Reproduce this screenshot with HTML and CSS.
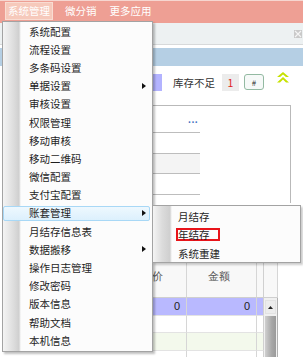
FILE: index.html
```html
<!DOCTYPE html>
<html>
<head>
<meta charset="utf-8">
<link rel="stylesheet" href="styles.css">
</head>
<body>
<div class="topbar">
  <span class="tab active">系统管理</span>
  <span class="tab">微分销</span>
  <span class="tab">更多应用</span>
</div>
<div class="strip">
  <span class="close"><svg width="8" height="8" viewBox="0 0 8 8"><rect width="8" height="8" fill="#c9c9c9"/><path d="M1 1L7 7M7 1L1 7" stroke="#f4f4f4" stroke-width="1.2"/></svg></span>
</div>
<div class="bluebar"></div>
<div class="main">
  <div class="filter">
    <span class="pbox"></span>
    <span class="lbl">库存不足</span>
    <span class="num">1</span>
    <span class="hash">#</span>
    <svg class="up" width="12" height="11" viewBox="0 0 12 11"><path d="M6 0L12 5H9L6 2.5L3 5H0Z" fill="#c6e200"/><path d="M6 5L12 10.5H9L6 7.5L3 10.5H0Z" fill="#c6e200"/></svg>
  </div>
  <div class="panel">
    <div class="prow first"><span class="dots">...</span></div>
    <div class="prow"></div>
    <div class="prow gray"></div>
    <div class="prow"></div>
  </div>
  <div class="table">
    <div class="trow head"><div class="c1">价</div><div class="c2">金额</div><div class="c3"></div><div class="c4"></div></div>
    <div class="trow sel"><div class="c1">0</div><div class="c2">0</div><div class="c3"></div><div class="c4 sb"><span class="sbup"><svg width="5" height="3" viewBox="0 0 5 3"><path d="M0 3L2.5 0L5 3Z" fill="#222"/></svg></span></div></div>
    <div class="trow"><div class="c1"></div><div class="c2"></div><div class="c3"></div><div class="c4 sb"><span class="thumb"></span></div></div>
    <div class="trow green"><div class="c1"></div><div class="c2"></div><div class="c3"></div><div class="c4 sb"><span class="thumb"></span></div></div>
    <div class="trow"><div class="c1"></div><div class="c2"></div><div class="c3"></div><div class="c4 sb"><span class="thumb"></span></div></div>
  </div>
</div>

<div class="menu">
  <div class="mi">系统配置</div>
  <div class="mi">流程设置</div>
  <div class="mi">多条码设置</div>
  <div class="mi sub">单据设置</div>
  <div class="mi">审核设置</div>
  <div class="mi">权限管理</div>
  <div class="mi">移动审核</div>
  <div class="mi">移动二维码</div>
  <div class="mi">微信配置</div>
  <div class="mi">支付宝配置</div>
  <div class="mi sub active">账套管理</div>
  <div class="mi">月结存信息表</div>
  <div class="mi sub">数据搬移</div>
  <div class="mi">操作日志管理</div>
  <div class="mi">修改密码</div>
  <div class="mi">版本信息</div>
  <div class="mi">帮助文档</div>
  <div class="mi">本机信息</div>
</div>

<div class="submenu">
  <div class="si">月结存</div>
  <div class="si"><span class="mark">年结存</span></div>
  <div class="si">系统重建</div>
</div>
</body>
</html>
```
FILE: styles.css
```css
* { box-sizing: border-box; }
html, body { margin: 0; padding: 0; }
body {
  width: 303px;
  height: 357px;
  overflow: hidden;
  position: relative;
  background: #fff;
  font-family: "Noto Sans CJK SC", "Noto Sans", sans-serif;
  font-size: 10.5px;
  color: #1c1c1c;
}
.topbar {
  height: 23px;
  background: #ee9f94;
  border-top: 1px solid #f6d6d0;
  display: flex;
  align-items: flex-start;
  padding-left: 5px;
  padding-top: 1px;
}
.tab {
  color: #fff;
  height: 18px;
  line-height: 18px;
  padding: 0 3px;
  margin-right: 6px;
  white-space: nowrap;
}
.tab.active {
  background: #f6c9bb;
  border: 1px solid #f9dcd2;
  line-height: 16px;
  padding: 0 2px;
}
.tab:nth-child(2) { margin-left: 3px; margin-right: 7px; }
.strip {
  height: 22px;
  background: #edf1f2;
  border-bottom: 1px solid #d7d9da;
  display: flex;
  justify-content: flex-end;
  align-items: center;
  padding-right: 1px;
  margin-bottom: 3px;
}
.close { display: flex; }
.bluebar {
  height: 18px;
  background: #b5cfe4;
}
.main { padding-left: 150px; }
.filter {
  height: 25px;
  display: flex;
  align-items: center;
}
.pbox {
  width: 12px;
  height: 17px;
  background: #b3b3ff;
  margin-top: 7px;
}
.lbl { margin-left: 11px; margin-top: 8px; color: #333; }
.num {
  width: 17px;
  height: 17px;
  background: #ececec;
  color: #e02020;
  margin-left: 7px;
  margin-top: 7px;
  display: flex;
  align-items: center;
  justify-content: center;
}
.hash {
  width: 20px;
  height: 16px;
  border: 1px solid #93baa2;
  border-radius: 3px;
  background: #f6f9f8;
  margin-left: 5px;
  margin-top: 7px;
  font-size: 8px;
  display: flex;
  align-items: center;
  justify-content: center;
  color: #333;
}
.up { margin-left: 13px; margin-top: -2px; }
.panel {
  margin-top: 14px;
  width: 141px;
  height: 98px;
  border-top: 1px solid #b9b9b9;
  border-right: 1px solid #b9b9b9;
}
.prow {
  width: 50px;
  height: 20.5px;
  border-bottom: 1px solid #bdbdbd;
}
.prow.first { height: 27px; position: relative; }
.prow.gray { background: #f4f4f4; }
.dots {
  position: absolute;
  left: 38px;
  top: 9px;
  color: #3f6fbf;
  font-size: 9px;
  line-height: 9px;
  letter-spacing: 0.5px;
  font-weight: bold;
}
.table { margin-top: 50px; }
.trow {
  display: grid;
  grid-template-columns: 37px 70px 7px 14px 25px;
  height: 17.5px;
}
.trow > div { border-right: 1px solid #d6d6d6; border-bottom: 1px solid #e3e3e3; }
.trow.head { height: 45px; }
.trow.head > div {
  background: #f8f8f8;
  border-bottom: 1px solid #cfcfcf;
  display: flex;
  align-items: center;
  justify-content: center;
  color: #555;
  padding-top: 2px;
}
.trow.head .c1 { justify-content: flex-start; padding-left: 2px; }
.trow.sel .c1, .trow.sel .c2, .trow.sel .c3 { background: #b9b9ff; }
.trow.green .c1, .trow.green .c2, .trow.green .c3 { background: #f3f9ec; }
.trow .c1, .trow .c2 {
  text-align: right;
  padding-right: 6px;
  line-height: 17px;
  font-family: "Liberation Sans", sans-serif;
  font-size: 11px;
}
.trow .c3 { border-right: 1px solid #d0d0d0; }
.trow .c4.sb {
  background: #f0f0f0;
  border-bottom: none;
  border-right: 1px solid #b0b0b0;
  padding: 0 1px;
  position: relative;
}
.sbup {
  display: flex;
  align-items: center;
  justify-content: center;
  margin-top: 2px;
  height: 14px;
  background: #ececec;
  border: 1px solid #e2e2e2;
}
.thumb {
  display: block;
  height: 100%;
  background: linear-gradient(to right, #d0d0d0, #a8a8a8 60%, #9a9a9a);
}
.menu {
  position: absolute;
  left: 2px;
  top: 21px;
  width: 151px;
  border: 1px solid #a3a3a3;
  padding-bottom: 2px;
  background: linear-gradient(to right, #f4f4f4 0, #dcdcdc 11px, #cfcfcf 16px, #e9e9e9 17px, #fcfcfc 18px, #fcfcfc 100%);
  box-shadow: 2px 2px 2px rgba(0,0,0,0.25);
  z-index: 2;
}
.mi {
  height: 18.2px;
  display: flex;
  align-items: center;
  padding-left: 26px;
  position: relative;
  color: #1e1e1e;
}
.mi.sub::after {
  content: "";
  position: absolute;
  right: 6px;
  top: 6px;
  border-left: 4px solid #111;
  border-top: 3.5px solid transparent;
  border-bottom: 3.5px solid transparent;
}
.mi.active::before {
  content: "";
  position: absolute;
  left: 0;
  right: 2px;
  top: 2px;
  bottom: 1px;
  border: 1px solid #a8d8f6;
  border-radius: 2px;
  background: linear-gradient(#eef8fe, #dcf0fd);
  z-index: -1;
}
.mi.active { z-index: 0; }
.submenu {
  position: absolute;
  left: 152px;
  top: 205px;
  width: 149px;
  height: 58px;
  border: 1px solid #a3a3a3;
  padding-top: 1px;
  background: linear-gradient(to right, #f4f4f4 0, #dcdcdc 9px, #cfcfcf 17px, #e9e9e9 18px, #fcfcfc 19px, #fcfcfc 100%);
  box-shadow: 2px 2px 2px rgba(0,0,0,0.2);
  z-index: 3;
}
.si {
  height: 18.5px;
  display: flex;
  align-items: center;
  padding-left: 25px;
  color: #1e1e1e;
}
.mark {
  border: 2px solid #e8141a;
  margin-left: -2px;
  padding: 0 8px 0 0;
  line-height: 10px;
  height: 13px;
  display: inline-flex;
  align-items: center;
}
```
